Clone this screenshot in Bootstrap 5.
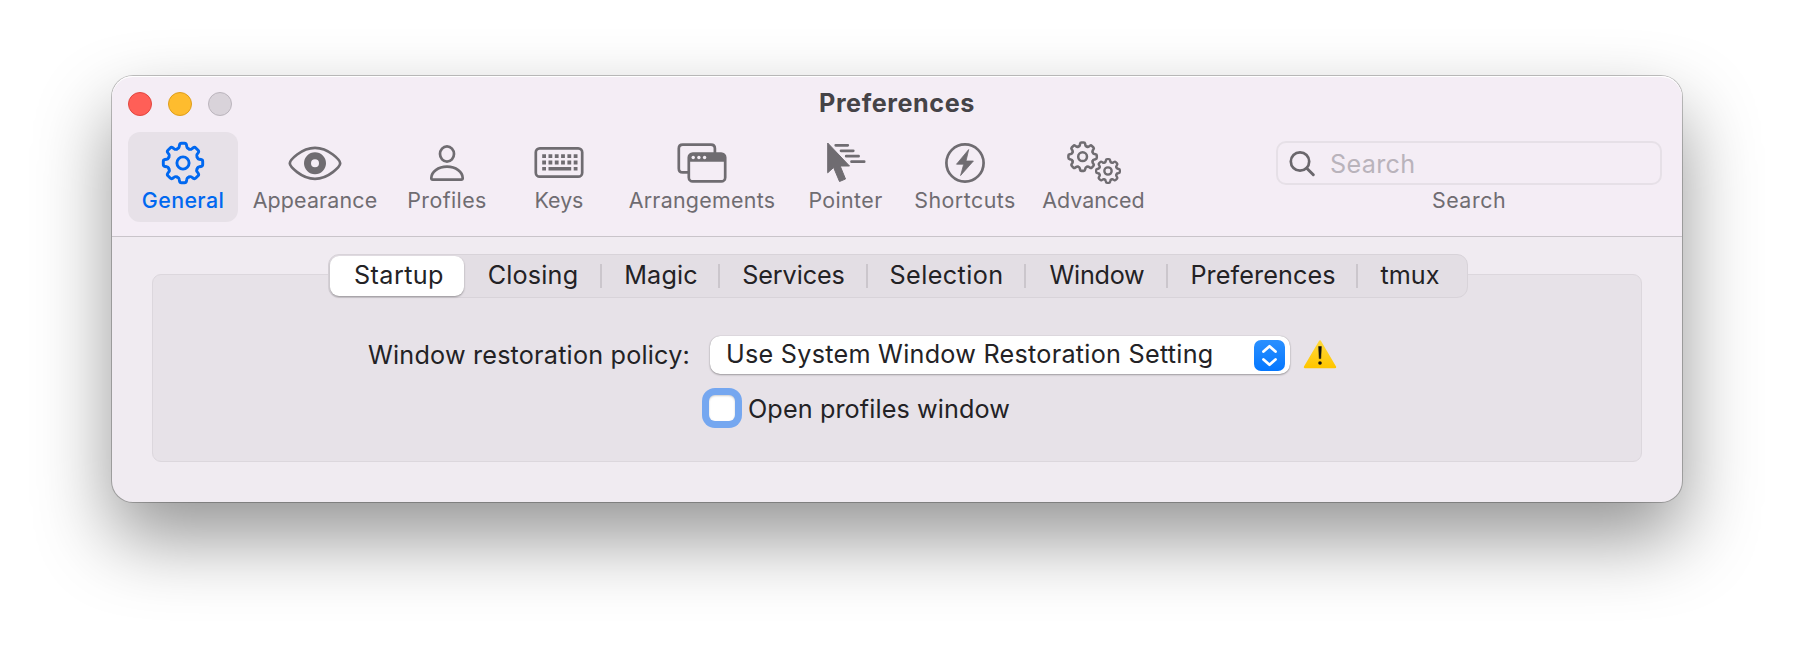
<!DOCTYPE html>
<html lang="en">
<head>
<meta charset="utf-8">
<title>Preferences</title>
<link href="https://cdn.jsdelivr.net/npm/bootstrap@5.3.0/dist/css/bootstrap.min.css" rel="stylesheet">
<style>
body{background:#fff;min-height:650px;padding:76px 0 0 112px;font-family:Inter,"Liberation Sans",sans-serif;font-size:25.2px;line-height:30px;color:#232225;overflow:hidden}
.pref-window{width:1570px;height:426px;border-radius:21px;background:#f0ebf1;box-shadow:0 0 0 1px rgba(0,0,0,.23),0 36px 76px rgba(0,0,0,.42)}
.pref-header{height:161px;background:#f4edf5;border-bottom:1px solid #c9c4ca;border-radius:21px 21px 0 0;box-shadow:inset 0 1px 0 #fff}
.title-bar{height:56px;padding:0 16px}
.lights{width:200px;gap:16px}
.light{width:24px;height:24px;border-radius:50%;border:1px solid}
.light-close{background:#ff5f57;border-color:#e2463f}
.light-min{background:#febc2e;border-color:#df9e1b}
.light-off{background:#d9d3da;border-color:#bbb5bd}
.win-title{font-weight:700;letter-spacing:.57px;color:#454347;line-height:55px;height:56px}
.tools{padding:0 20px 0 16px}
.tool{height:90px;padding-top:9px;border-radius:12px;color:#6f6c71;font-size:21.4px;line-height:31px;text-align:center;text-decoration:none;flex:none}
.tool svg{display:block;height:44px;margin:0 auto;overflow:visible}
.tool.active{background:#e7e1e8;color:#0068f0;font-weight:500}
.tool:nth-child(1){width:110px;letter-spacing:.38px}
.tool:nth-child(2){width:154px;letter-spacing:.16px}
.tool:nth-child(3){width:109px;letter-spacing:.41px;padding-left:1px}
.tool:nth-child(4){width:116px;letter-spacing:-.03px}
.tool:nth-child(5){width:170px;letter-spacing:.28px}
.tool:nth-child(6){width:117px;letter-spacing:.38px}
.tool:nth-child(7){width:122px;letter-spacing:.47px}
.tool:nth-child(8){width:135px;letter-spacing:.01px}
.ln{fill:none;stroke:currentColor;stroke-width:2.7;stroke-linecap:round;stroke-linejoin:round}
.tool.active .ln{stroke-width:2.9}
.gear-mid{stroke-width:3.5}
.gear-small{stroke-width:3.9}
.search-handle{stroke-width:3}
.search-col{width:386px;padding-top:9px;font-size:21.4px;line-height:31px;letter-spacing:.53px;color:#6f6c71}
.search-box{height:44px;border:2px solid #e6e0e7;border-radius:10px;padding-left:11px;gap:14px;color:#6a676c}
.search-box .form-control{font-size:25.2px;letter-spacing:.3px;line-height:30px;padding:2px 0 0;height:34px}
.search-box .form-control::placeholder{color:#b9b3bb;opacity:1}
.pref-body{padding:17px 40px 0}
.segments{width:1140px;height:44px;margin-left:2px;border:1px solid #d8d3d9;border-radius:11px;background:#e3dee4;z-index:1}
.seg{flex:none;height:42px;line-height:41px;color:inherit;text-decoration:none;text-align:center;padding-left:2px}
.segments .vr{width:2px;min-height:0;height:24px;background:#cbc6cc;opacity:1;flex:none;align-self:center}
.seg.active{background:#fff;width:134px;height:40px;border-radius:9px;margin:1px 0 0 1px;line-height:39px;padding-left:4px;box-shadow:0 1px 2px rgba(0,0,0,.35);letter-spacing:.4px}
.s-closing{width:136px;letter-spacing:.19px}
.s-magic{width:116px;letter-spacing:.14px}
.s-services{width:146px;letter-spacing:-.09px;padding-left:1px}
.s-selection{width:156px;letter-spacing:.4px;padding-left:1px}
.s-window{width:140px;letter-spacing:-.25px}
.s-prefs{width:188px;letter-spacing:.1px}
.s-tmux{width:109px;letter-spacing:.03px;padding:0 5px 0 0}
.group-box{height:188px;margin-top:-24px;border:1px solid #dcd7dd;border-radius:9px;background:#e7e2e8;padding-top:61px}
.policy-row{height:40px}
.policy-label{width:537px;text-align:right;letter-spacing:.2px;padding-top:4px}
.policy-select{width:580px;height:38px;margin:0 13px 0 20px;padding:0 5px 0 16px;border:0;border-radius:10px;background:#fff;color:inherit;font-size:25.2px;line-height:30px;letter-spacing:.26px;box-shadow:0 0 1px rgba(0,0,0,.3),0 1px 2px rgba(0,0,0,.3)}
.policy-select span{margin-top:-2px}
.stepper{width:31px;height:31px;border-radius:7px;background:linear-gradient(#2a90ff,#0577ff)}
.check-row{padding:12px 0 0 549px}
.check-row .form-check-input{width:26px;height:26px;margin:7px;border:0;border-radius:6px;background:#fff;flex:none;box-shadow:0 0 0 7px #75a7f0,inset 0 1px 2px rgba(0,0,0,.2)}
.check-row label{margin-left:6px;letter-spacing:.11px;padding-top:2px}
</style>
</head>
<body>
<svg width="0" height="0" class="position-absolute" aria-hidden="true">
  <defs>
    <path id="tooth" d="M-5.8-14.1Q-4-14.6-3.8-16.2L-3.5-18Q-3.2-19.7-1.6-19.7H1.6Q3.2-19.7 3.5-18L3.8-16.2Q4-14.6 5.8-14.1"/>
    <g id="gear">
      <use href="#tooth"/><use href="#tooth" transform="rotate(45)"/><use href="#tooth" transform="rotate(90)"/><use href="#tooth" transform="rotate(135)"/>
      <use href="#tooth" transform="rotate(180)"/><use href="#tooth" transform="rotate(225)"/><use href="#tooth" transform="rotate(270)"/><use href="#tooth" transform="rotate(315)"/>
      <circle r="6.1"/>
    </g>
  </defs>
</svg>
<main class="pref-window">
  <header class="pref-header">
    <div class="title-bar d-flex align-items-center">
      <div class="lights d-flex"><span class="light light-close"></span><span class="light light-min"></span><span class="light light-off"></span></div>
      <div class="win-title flex-grow-1 text-center">Preferences</div>
      <div class="lights"></div>
    </div>
    <div class="tools d-flex justify-content-between">
      <nav class="d-flex">
        <a class="tool active" href="#"><svg width="44" viewBox="-22 -22 44 44"><use href="#gear" class="ln"/></svg>General</a>
        <a class="tool" href="#"><svg width="54" viewBox="0 0 54 44"><path class="ln" d="M1.8 22.3C1.8 19.5 13 6.8 27 6.8S52.2 19.5 52.2 22.3 41 37.8 27 37.8 1.8 25.1 1.8 22.3Z"/><circle cx="27" cy="22.3" r="7.5" fill="none" stroke="currentColor" stroke-width="7"/></svg>Appearance</a>
        <a class="tool" href="#"><svg width="36" viewBox="0 0 36 44"><ellipse class="ln" cx="18" cy="13" rx="7" ry="7.7"/><path class="ln" d="M3.7 38.7Q2.3 38.7 2.3 37C2.3 31 9 25.7 18 25.7S33.7 31 33.7 37Q33.7 38.7 32.3 38.7Z"/></svg>Profiles</a>
        <a class="tool" href="#"><svg width="50" viewBox="0 0 50 44"><rect class="ln" x="1.8" y="7.3" width="46.4" height="28.4" rx="4"/><path d="M8.2 15.2H44M8.2 21.5H44" fill="none" stroke="currentColor" stroke-width="3.8" stroke-dasharray="3.8 2.5"/><path d="M8.2 27.8H12M14.5 27.8H37.2M39.7 27.8H43.5" fill="none" stroke="currentColor" stroke-width="3.6"/></svg>Keys</a>
        <a class="tool" href="#"><svg width="50" viewBox="0 0 50 44"><path class="ln" d="M10.5 31.4H5.8Q1.8 31.4 1.8 27.4V7.6Q1.8 3.6 5.8 3.6H33.9Q37.9 3.6 37.9 7.6V12"/><rect class="ln" x="11.8" y="12.6" width="36.4" height="27.8" rx="4"/><path d="M11.8 20.7V16.5Q11.8 12.5 15.8 12.5H44.2Q48.2 12.5 48.2 16.5V20.7Z" fill="currentColor"/><g fill="#f4edf5"><circle cx="16.2" cy="16.5" r="1.7"/><circle cx="21.9" cy="16.5" r="1.7"/><circle cx="27.6" cy="16.5" r="1.7"/></g></svg>Arrangements</a>
        <a class="tool" href="#"><svg width="40" viewBox="0 0 40 44"><path d="M1.7 2V31.800L7.600 26.500 13.500 40.500 19.500 38 14.200 25H23.500Z" fill="currentColor" stroke="currentColor" stroke-linejoin="round"/><path class="ln" d="M9.700 4.300H21.800M15 9.800H27.300M20.200 15.200H32.600M25.500 20.700H38.200"/></svg>Pointer</a>
        <a class="tool" href="#"><svg width="40" viewBox="0 0 40 44"><circle class="ln" cx="20" cy="22" r="18.6"/><path d="M23.700 8.500 11.500 23.200H18.700L15.600 34.500 28.400 20H21Z" fill="currentColor" stroke="currentColor" stroke-width=".8" stroke-linejoin="round"/></svg>Shortcuts</a>
        <a class="tool" href="#"><svg width="54" viewBox="0 0 54 44"><use href="#gear" class="ln gear-mid" transform="translate(15.6 15.7) scale(.72)"/><use href="#gear" class="ln gear-small" transform="translate(41 30) scale(.6)"/></svg>Advanced</a>
      </nav>
      <div class="search-col text-center">
        <div class="search-box d-flex align-items-center">
          <svg width="27" height="27" viewBox="0 0 27 27" class="flex-shrink-0"><circle class="ln" cx="11" cy="11.5" r="9.2"/><path class="ln search-handle" d="M18 18.5 24.3 24.7"/></svg>
          <input class="form-control border-0 bg-transparent shadow-none" type="search" placeholder="Search" aria-label="Search">
        </div>
        Search
      </div>
    </div>
  </header>
  <section class="pref-body">
    <div class="d-flex justify-content-center">
      <nav class="segments d-flex">
        <a class="seg active" href="#">Startup</a>
        <a class="seg s-closing" href="#">Closing</a><span class="vr"></span>
        <a class="seg s-magic" href="#">Magic</a><span class="vr"></span>
        <a class="seg s-services" href="#">Services</a><span class="vr"></span>
        <a class="seg s-selection" href="#">Selection</a><span class="vr"></span>
        <a class="seg s-window" href="#">Window</a><span class="vr"></span>
        <a class="seg s-prefs" href="#">Preferences</a><span class="vr"></span>
        <a class="seg s-tmux" href="#">tmux</a>
      </nav>
    </div>
    <div class="group-box">
      <div class="policy-row d-flex">
        <div class="policy-label text-nowrap">Window restoration policy:</div>
        <button class="policy-select d-flex align-items-center justify-content-between text-nowrap" type="button">
          <span>Use System Window Restoration Setting</span>
          <i class="stepper d-block"><svg class="d-block" width="31" height="31" viewBox="0 0 31 31"><path d="M9.500 11.500 15.500 6.300 21.500 11.500M9.500 19.500 15.500 24.700 21.500 19.500" fill="none" stroke="#fff" stroke-width="2.8" stroke-linecap="round" stroke-linejoin="round"/></svg></i>
        </button>
        <svg width="34" height="38" viewBox="0 0 34 38"><defs><linearGradient id="warn" x2="0" y2="1"><stop stop-color="#ffd83a"/><stop offset="1" stop-color="#ffc600"/></linearGradient></defs><path d="M17 5.500 2 31H32Z" fill="url(#warn)" stroke="url(#warn)" stroke-width="2.4" stroke-linejoin="round"/><path d="M15.600 10.500H18.400L17.800 22.600H16.200Z" fill="#111" stroke="#111" stroke-width=".5" stroke-linejoin="round"/><circle cx="17" cy="27" r="1.800" fill="#111"/></svg>
      </div>
      <div class="check-row d-flex align-items-center">
        <input class="form-check-input" type="checkbox" id="openProfiles"><label for="openProfiles">Open profiles window</label>
      </div>
    </div>
  </section>
</main>
<script src="https://cdn.jsdelivr.net/npm/bootstrap@5.3.0/dist/js/bootstrap.bundle.min.js"></script>
</body>
</html>
